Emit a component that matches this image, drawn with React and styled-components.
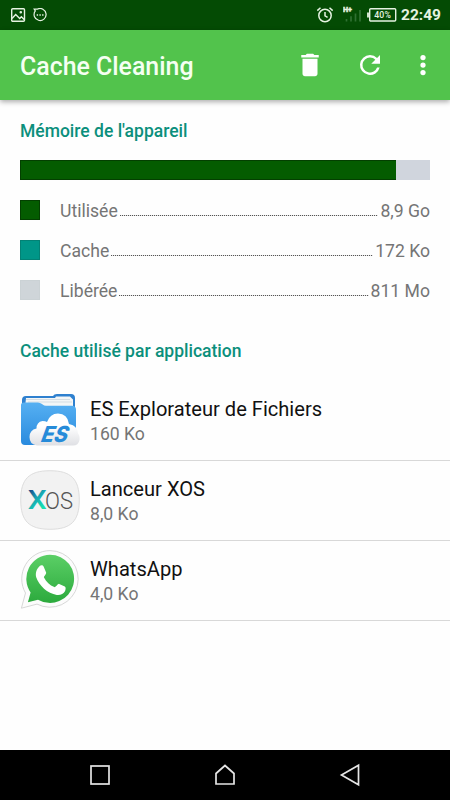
import React from "react";
import styled, { createGlobalStyle } from "styled-components";

const GlobalStyle = createGlobalStyle`
  * {
    box-sizing: border-box;
  }

  body {
    margin: 0;
    background: #fff;
    font-family: Roboto, "Liberation Sans", sans-serif;
  }

  svg {
    display: block;
    flex-shrink: 0;
  }
`;

const Screen = styled.div`
  display: flex;
  flex-direction: column;
  width: 450px;
  height: 800px;
  background: #fefefe;
  overflow: hidden;
`;

const StatusBar = styled.header`
  display: flex;
  align-items: center;
  justify-content: space-between;
  height: 30px;
  padding: 0 10px;
  background: #044b04;
  color: #e6f3e2;
`;

const StatusGroup = styled.div`
  display: flex;
  align-items: center;
  gap: ${(props) => props.$gap}px;
`;

const Clock = styled.span`
  width: 39px;
  font-size: 15.5px;
  font-weight: 700;
  line-height: 30px;
  white-space: nowrap;
`;

const Toolbar = styled.div`
  display: flex;
  align-items: center;
  height: 70px;
  flex-shrink: 0;
  padding: 0 5px 0 20px;
  background: #52c34c;
  box-shadow: 0 2px 5px rgba(0, 0, 0, 0.32);
  color: #f5fff2;
`;

const Title = styled.h1`
  flex: 1;
  margin: 0;
  padding-top: 4px;
  font-size: 24.9px;
  font-weight: 500;
  line-height: 30px;
`;

const Actions = styled.div`
  display: flex;
  align-items: center;
  color: #fff;
`;

const IconButton = styled.button`
  display: flex;
  align-items: center;
  justify-content: center;
  width: ${(props) => props.$width}px;
  height: 60px;
  padding: 0;
  border: 0;
  background: none;
  color: inherit;
`;

const Content = styled.main`
  flex: 1;
`;

const SectionTitle = styled.h2`
  height: 20px;
  margin: 0;
  font-size: 17.5px;
  font-weight: 500;
  line-height: 20px;
  color: #0b8f7c;
`;

const Memory = styled.section`
  padding: 21px 20px 0;
`;

const MemoryBar = styled.div`
  display: flex;
  height: 20px;
  margin: 19px 0 20px;
  background: #d0d5dd;
`;

const MemoryUsed = styled.div`
  background: #045c00;
  border: solid #033f00;
  border-width: 1px 0 1px 1px;
`;

const MemoryRow = styled.div`
  display: flex;
  align-items: center;
  height: 20px;
  margin-bottom: 20px;
  font-size: 17.6px;
  line-height: 20px;
  color: #757575;
`;

const Swatch = styled.div`
  width: 20px;
  height: 20px;
  margin-right: 20px;
  background: ${(props) => props.$color};
  border: 1px solid ${(props) => props.$border};
`;

const MemoryText = styled.span`
  padding-top: 2px;
`;

const Dots = styled.div`
  flex: 1;
  align-self: flex-end;
  height: 1px;
  margin: 0 2px 4px;
  background: repeating-linear-gradient(
    to right,
    #555 0,
    #555 1px,
    #e4e4e4 1px,
    #e4e4e4 2px
  );
`;

const Apps = styled.section`
  padding-top: 21px;
`;

const AppsTitle = styled(SectionTitle)`
  margin: 0 20px 19px;
`;

const AppRow = styled.div`
  display: flex;
  align-items: center;
  height: 80px;
  padding: 0 20px;
  box-shadow: 0 1px 0 #d8d8d8;
`;

const AppInfo = styled.div`
  margin-left: 10px;
  padding-top: 2px;
`;

const AppName = styled.div`
  font-size: 20.1px;
  line-height: 26px;
  color: #111;
`;

const AppSize = styled.div`
  font-size: 17.6px;
  line-height: 24px;
  color: #757575;
`;

const NavBar = styled.nav`
  display: flex;
  align-items: center;
  justify-content: space-between;
  height: 50px;
  padding: 0 88px;
  background: #000;
`;

const LogoText = styled.text`
  font-family: ${(props) => props.$font};
  font-size: ${(props) => props.$size}px;
  font-style: ${(props) => (props.$italic ? "italic" : "normal")};
  font-weight: ${(props) => props.$weight};
`;

const memory = [
  { label: "Utilisée", value: "8,9 Go", color: "#045c00", border: "#033f00" },
  { label: "Cache", value: "172 Ko", color: "#009688", border: "#038275" },
  { label: "Libérée", value: "811 Mo", color: "#cfd5d9", border: "#cbd2d5" },
];

const PictureIcon = () => (
  <svg width="16" height="16" viewBox="0 0 16 16" fill="none" stroke="currentColor" strokeWidth="1.4">
    <rect x="1.7" y="1.7" width="12.8" height="12.6" rx="1" />
    <path d="M2 11.5l3.7-4 4 4 1.7-1.8 3 3" />
    <circle cx="10.8" cy="5.3" r="0.6" fill="currentColor" />
  </svg>
);

const ChatIcon = () => (
  <svg width="14" height="14" viewBox="0 0 14 14" fill="none" stroke="currentColor" strokeWidth="1.2">
    <path d="M1.2 1.2h3.1a6 6 0 1 1-2 1.7z" />
    <path d="M3.7 7h1.4M6.4 7h1.4M9.1 7h1.4" strokeWidth="1.3" />
  </svg>
);

const AlarmIcon = () => (
  <svg width="18" height="18" viewBox="0 0 18 18" fill="none" stroke="currentColor" strokeWidth="1.5">
    <circle cx="9" cy="9.5" r="6.2" />
    <path d="M9 6v3.8l2.6 1.6M1.3 4.6l3.2-2.8M16.7 4.6l-3.2-2.8" />
  </svg>
);

const SignalIcon = () => (
  <svg width="20" height="18" viewBox="0 0 20 18">
    <LogoText
      x="0"
      y="6.3"
      $font="Roboto, sans-serif"
      $size={8}
      $weight={900}
      fill="currentColor"
      stroke="currentColor"
      strokeWidth="0.4"
      textLength="9"
      lengthAdjust="spacingAndGlyphs"
    >
      H+
    </LogoText>
    <path d="M3.5 13v2.5M8 10.3v5.2M12.500 7.500v8M17 4v11.500" stroke="#2f7032" strokeWidth="1.7" />
  </svg>
);

const BatteryIcon = () => (
  <svg width="30" height="16" viewBox="0 0 30 16" fill="none">
    <rect x="2.7" y="1.7" width="26" height="12.3" rx="1" stroke="currentColor" strokeWidth="1.4" />
    <path d="M1 5.5v5" stroke="currentColor" strokeWidth="1.8" />
    <LogoText x="7.3" y="11" $font="Roboto, sans-serif" $size={8.7} $weight={500} fill="currentColor" textLength="16.5">
      40%
    </LogoText>
  </svg>
);

const TrashIcon = () => (
  <svg width="30" height="30" viewBox="0 0 24 24" fill="currentColor">
    <path d="M6 19c0 1.1.9 2 2 2h8c1.1 0 2-.9 2-2V7H6v12zM19 4h-3.5l-1-1h-5l-1 1H5v2h14V4z" />
  </svg>
);

const RefreshIcon = () => (
  <svg width="30" height="30" viewBox="0 0 24 24" fill="currentColor">
    <path d="M17.65 6.35A7.96 7.96 0 0 0 12 4a8 8 0 1 0 7.73 10h-2.08A6 6 0 1 1 12 6c1.66 0 3.14.69 4.22 1.78L13 11h7V4l-2.35 2.35z" />
  </svg>
);

const MoreIcon = () => (
  <svg width="30" height="30" viewBox="0 0 24 24" fill="currentColor">
    <circle cx="12" cy="6" r="2.1" />
    <circle cx="12" cy="12" r="2.1" />
    <circle cx="12" cy="18" r="2.1" />
  </svg>
);

const EsIcon = () => (
  <svg width="60" height="60" viewBox="0 0 60 60">
    <defs>
      <linearGradient id="esFolder" x1="0" y1="0" x2="0" y2="1">
        <stop offset="0" stopColor="#56b0f2" />
        <stop offset="1" stopColor="#298ade" />
      </linearGradient>
      <linearGradient id="esCloud" x1="0" y1="0" x2="0" y2="1">
        <stop offset="0.4" stopColor="#fff" />
        <stop offset="1" stopColor="#dfe0e4" />
      </linearGradient>
    </defs>
    <path d="M2 10q0-4 4-4h27q1-2 4-2h14q4 0 4 4v19H2z" fill="#2e80cf" />
    <path d="M6 8h29l1-1.5h14l3 3v8H5z" fill="#f3f6f7" />
    <path d="M6 9.5h44M8 12h44" stroke="#c6d3da" strokeWidth="0.7" />
    <path d="M1 15q0-2.5 3-2.5h14q2 0 4 1.5l1 .8q1 .9 3 .9h26q4 0 4 4V51q0 4-4 4H5q-4 0-4-4z" fill="url(#esFolder)" />
    <path
      d="M17 55.500q-7.500-1-7.500-8.500 0-7 7-8.500 0-6.500 6-7.500 3 0 4.500 1 3-8.500 11-8.500 9.500 0 11 10.500 9 2 9 9.500 2 2 1.500 6.500-1 5.500-6.500 5.500z"
      fill="url(#esCloud)"
    />
    <g transform="translate(20.5 52) skewX(-12)">
      <LogoText
        x="0"
        y="0"
        $font="Inter, sans-serif"
        $size={22}
        $weight={800}
        $italic
        fill="#268bd9"
        textLength="26.5"
        lengthAdjust="spacingAndGlyphs"
      >
        ES
      </LogoText>
    </g>
  </svg>
);

const XosIcon = () => (
  <svg width="60" height="60" viewBox="0 0 60 60">
    <defs>
      <linearGradient id="xosX" x1="0" y1="0" x2="0.6" y2="1">
        <stop offset="0.2" stopColor="#17508c" />
        <stop offset="0.5" stopColor="#18a3b3" />
        <stop offset="0.85" stopColor="#16dcb0" />
      </linearGradient>
    </defs>
    <path
      d="M30 .7C51 .7 59.3 9 59.3 30S51 59.3 30 59.3.7 51 .7 30 9 .7 30 .7z"
      fill="#f2f2f2"
      stroke="#d6d6d6"
      strokeWidth="0.8"
    />
    <LogoText
      x="7.7"
      y="39"
      $font="Roboto, sans-serif"
      $size={25.5}
      $weight={500}
      fill="url(#xosX)"
      textLength="19"
      lengthAdjust="spacingAndGlyphs"
    >
      X
    </LogoText>
    <LogoText x="25" y="38.7" $font="Roboto, sans-serif" $size={24.5} $weight={300} fill="#555" textLength="28" lengthAdjust="spacingAndGlyphs">
      OS
    </LogoText>
  </svg>
);

const WhatsAppIcon = () => (
  <svg width="60" height="60" viewBox="0 0 60 60">
    <defs>
      <linearGradient id="waGreen" x1="0" y1="0" x2="0" y2="1">
        <stop offset="0" stopColor="#5bcf66" />
        <stop offset="1" stopColor="#2caa3d" />
      </linearGradient>
    </defs>
    <path
      d="M30 .6a28.3 28.3 0 1 1-13 53.5L1.4 58.2l4.1-15.2A28.3 28.3 0 0 1 30 .6z"
      fill="#fcfcfc"
      stroke="#d2d2d2"
      strokeWidth="0.9"
    />
    <path d="M30 4.7a24.1 24.1 0 1 1-12 45L7.9 52.3l2.7-9.8A24.1 24.1 0 0 1 30 4.7z" fill="url(#waGreen)" />
    <path
      d="M20 15.8c1.1-.8 3-.7 3.6.8l2.5 5.8c.6 1.4-2.7 4-2.1 5.2 2.5 4.8 5.600 7.600 10.300 9.500 1.400.5 3.600-3.600 4.900-3.200l5.600 2.700c1.200.6 1 2.700.3 4.400-1.500 3.100-5.200 4.400-8.300 3.900-9.200-1.500-17.900-9.400-20.600-17.700-1.100-4 .4-8.500 3.800-11.400z"
      fill="#fff"
    />
  </svg>
);

const apps = [
  { name: "ES Explorateur de Fichiers", size: "160 Ko", Icon: EsIcon },
  { name: "Lanceur XOS", size: "8,0 Ko", Icon: XosIcon },
  { name: "WhatsApp", size: "4,0 Ko", Icon: WhatsAppIcon },
];

const App = () => {
  return (
    <Screen>
      <GlobalStyle />
      <StatusBar>
        <StatusGroup $gap={7}>
          <PictureIcon />
          <ChatIcon />
        </StatusGroup>
        <StatusGroup $gap={4}>
          <StatusGroup $gap={9}>
            <AlarmIcon />
            <SignalIcon />
          </StatusGroup>
          <BatteryIcon />
          <Clock>22:49</Clock>
        </StatusGroup>
      </StatusBar>
      <Toolbar>
        <Title>Cache Cleaning</Title>
        <Actions>
          <IconButton $width={60} aria-label="Supprimer">
            <TrashIcon />
          </IconButton>
          <IconButton $width={60} aria-label="Actualiser">
            <RefreshIcon />
          </IconButton>
          <IconButton $width={45} aria-label="Plus">
            <MoreIcon />
          </IconButton>
        </Actions>
      </Toolbar>
      <Content>
        <Memory>
          <SectionTitle>Mémoire de l'appareil</SectionTitle>
          <MemoryBar>
            <MemoryUsed style={{ width: "91.8%" }} />
          </MemoryBar>
          {memory.map((item) => (
            <MemoryRow key={item.label}>
              <Swatch $color={item.color} $border={item.border} />
              <MemoryText>{item.label}</MemoryText>
              <Dots />
              <MemoryText>{item.value}</MemoryText>
            </MemoryRow>
          ))}
        </Memory>
        <Apps>
          <AppsTitle>Cache utilisé par application</AppsTitle>
          {apps.map(({ name, size, Icon }) => (
            <AppRow key={name}>
              <Icon />
              <AppInfo>
                <AppName>{name}</AppName>
                <AppSize>{size}</AppSize>
              </AppInfo>
            </AppRow>
          ))}
        </Apps>
      </Content>
      <NavBar>
        <svg width="24" height="24" viewBox="0 0 24 24" fill="none" stroke="#e5e5e5" strokeWidth="1.7">
          <rect x="3" y="3" width="18" height="18" />
        </svg>
        <svg width="24" height="24" viewBox="0 0 24 24" fill="none" stroke="#e5e5e5" strokeWidth="1.7">
          <path d="M3 21V10.5l9-8 9 8V21z" />
        </svg>
        <svg width="24" height="24" viewBox="0 0 24 24" fill="none" stroke="#e5e5e5" strokeWidth="1.7">
          <path d="M20.5 2.2v19.6L3.5 12z" />
        </svg>
      </NavBar>
    </Screen>
  );
};

export default App;
